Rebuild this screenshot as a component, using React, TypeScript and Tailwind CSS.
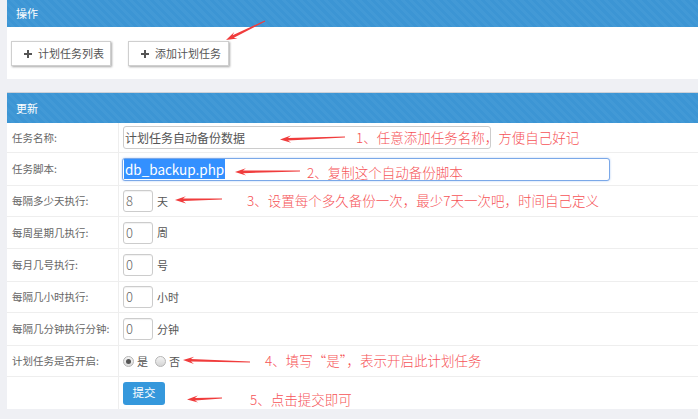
import React from "react";

type Arrow = { x1: number; y1: number; x2: number; y2: number };

function arrowPoints(a: Arrow): string {
  const dx = a.x2 - a.x1;
  const dy = a.y2 - a.y1;
  const len = Math.hypot(dx, dy);
  const ux = dx / len;
  const uy = dy / len;
  const px = -uy;
  const py = ux;
  const headLen = 11;
  const headW = 3.6;
  const neckW = 1.3;
  const tailW = 0.4;
  const bx = a.x2 - ux * headLen;
  const by = a.y2 - uy * headLen;
  const nx = a.x2 - ux * (headLen - 3);
  const ny = a.y2 - uy * (headLen - 3);
  const pts = [
    [a.x1 + px * tailW, a.y1 + py * tailW],
    [nx + px * neckW, ny + py * neckW],
    [bx + px * headW, by + py * headW],
    [a.x2, a.y2],
    [bx - px * headW, by - py * headW],
    [nx - px * neckW, ny - py * neckW],
    [a.x1 - px * tailW, a.y1 - py * tailW],
  ];
  return pts.map((p) => `${p[0].toFixed(1)},${p[1].toFixed(1)}`).join(" ");
}

const arrows: Arrow[] = [
  { x1: 265, y1: 21, x2: 226, y2: 40 },
  { x1: 345, y1: 137, x2: 280, y2: 139.5 },
  { x1: 300, y1: 171, x2: 235, y2: 172 },
  { x1: 222, y1: 199, x2: 175, y2: 200 },
  { x1: 250, y1: 362, x2: 183, y2: 360 },
  { x1: 222, y1: 398, x2: 187, y2: 399.5 },
];

function Plus() {
  return (
    <svg width="8" height="8" viewBox="0 0 8 8" className="shrink-0">
      <rect x="3" y="0" width="2" height="8" fill="#555" />
      <rect x="0" y="3" width="8" height="2" fill="#555" />
    </svg>
  );
}

function SmallInput({ value, unit }: { value: string; unit: string }) {
  return (
    <div className="flex items-center">
      <div className="w-[30px] h-[22px] border border-[#cccccc] rounded-[3px] bg-white flex items-center pl-[2px] text-[13px] text-[#666] font-light shadow-[inset_0_1px_1px_rgba(0,0,0,0.06)]">
        {value}
      </div>
      <span className="ml-[4px] text-[11px] text-[#555]">{unit}</span>
    </div>
  );
}

function Row({
  h,
  label,
  children,
  last,
}: {
  h: string;
  label: string;
  children?: React.ReactNode;
  last?: boolean;
}) {
  return (
    <div className={`flex ${h} ${last ? "" : "border-b border-[#eeeeee]"}`}>
      <div className="w-[112px] shrink-0 border-r border-[#eeeeee] pl-[5px] flex items-center text-[10.5px] text-[#666]">
        {label}
      </div>
      <div className="flex-1 flex items-center pl-[4px]">{children}</div>
    </div>
  );
}

const stripe =
  "bg-[repeating-linear-gradient(45deg,#3c95d4_0px,#3c95d4_3px,#4299d6_3px,#4299d6_6px)]";

const red = "absolute text-[13.5px] leading-[20px] text-[#f65357] font-light whitespace-nowrap";

export default function App() {
  return (
    <div
      className="relative w-[698px] h-[419px] overflow-hidden bg-[#eff0f4] pl-[7px]"
      style={{ fontFamily: '"Noto Sans CJK SC", "Noto Sans", sans-serif' }}
    >
      {/* Panel 1 */}
      <div>
        <div className={`h-[27px] ${stripe} flex items-center pl-[9px] text-white text-[11px]`}>
          操作
        </div>
        <div className="h-[52px] bg-white flex items-start pt-[14px] pl-[4px] gap-[17px]">
          <div className="w-[100px] h-[25px] border border-[#cfcfcf] bg-white flex items-center pl-[12px] gap-[6px] text-[11px] text-[#555] shadow-[1px_1px_2px_rgba(0,0,0,0.35)]">
            <Plus />
            <span>计划任务列表</span>
          </div>
          <div className="w-[101px] h-[25px] border border-[#cfcfcf] bg-white flex items-center pl-[12px] gap-[6px] text-[11px] text-[#555] shadow-[1px_1px_2px_rgba(0,0,0,0.35)]">
            <Plus />
            <span>添加计划任务</span>
          </div>
        </div>
      </div>

      {/* Panel 2 */}
      <div className="mt-[13px] border-t border-[#cdd1d8]">
        <div className={`h-[30px] ${stripe} flex items-center pl-[9px] text-white text-[11px]`}>
          更新
        </div>
        <div className="bg-white">
          <Row h="h-[30px]" label="任务名称:">
            <div className="w-[368px] h-[23px] border border-[#cccccc] rounded-[3px] bg-white flex items-center pl-[1px] text-[12px] text-[#555]">
              计划任务自动备份数据
            </div>
          </Row>
          <Row h="h-[33px]" label="任务脚本:">
            <div className="ml-[-1px] w-[488px] h-[23px] border border-[#7ba8e8] rounded-[3px] bg-white flex items-center pl-[1px] shadow-[0_0_2px_rgba(82,146,236,0.5)]">
              <span className="bg-[#3390ff] text-white text-[13.5px] leading-[20px] px-[1px]">
                db_backup.php
              </span>
            </div>
          </Row>
          <Row h="h-[31px]" label="每隔多少天执行:">
            <SmallInput value="8" unit="天" />
          </Row>
          <Row h="h-[32px]" label="每周星期几执行:">
            <SmallInput value="0" unit="周" />
          </Row>
          <Row h="h-[33px]" label="每月几号执行:">
            <SmallInput value="0" unit="号" />
          </Row>
          <Row h="h-[31px]" label="每隔几小时执行:">
            <SmallInput value="0" unit="小时" />
          </Row>
          <Row h="h-[33px]" label="每隔几分钟执行分钟:">
            <SmallInput value="0" unit="分钟" />
          </Row>
          <Row h="h-[31px]" label="计划任务是否开启:">
            <div className="flex items-center text-[11px] text-[#555]">
              <span className="w-[11px] h-[11px] rounded-full border border-[#b5b5b5] bg-[linear-gradient(#f4f4f4,#dcdcdc)] flex items-center justify-center">
                <span className="w-[5px] h-[5px] rounded-full bg-[#555]" />
              </span>
              <span className="ml-[3px]">是</span>
              <span className="ml-[7px] w-[11px] h-[11px] rounded-full border border-[#b5b5b5] bg-[linear-gradient(#f4f4f4,#d4d4d4)]" />
              <span className="ml-[3px]">否</span>
            </div>
          </Row>
          <Row h="h-[32px]" label="" last>
            <div className="w-[42px] h-[23px] rounded-[3px] bg-[#3598dc] text-white text-[11.5px] flex items-center justify-center">
              提交
            </div>
          </Row>
        </div>
      </div>

      {/* Annotations overlay */}
      <svg className="absolute left-0 top-0 pointer-events-none" width="698" height="419">
        {arrows.map((a, i) => (
          <polygon key={i} points={arrowPoints(a)} fill="#f03c3c" />
        ))}
      </svg>
      <div className={`${red} left-[356px] top-[127px]`}>1、任意添加任务名称，方便自己好记</div>
      <div className={`${red} left-[307px] top-[162px]`}>2、复制这个自动备份脚本</div>
      <div className={`${red} left-[247px] top-[190px]`}>
        3、设置每个多久备份一次，最少7天一次吧，时间自己定义
      </div>
      <div className={`${red} left-[265px] top-[350px]`}>4、填写“是”，表示开启此计划任务</div>
      <div className={`${red} left-[250px] top-[389px]`}>5、点击提交即可</div>
    </div>
  );
}
